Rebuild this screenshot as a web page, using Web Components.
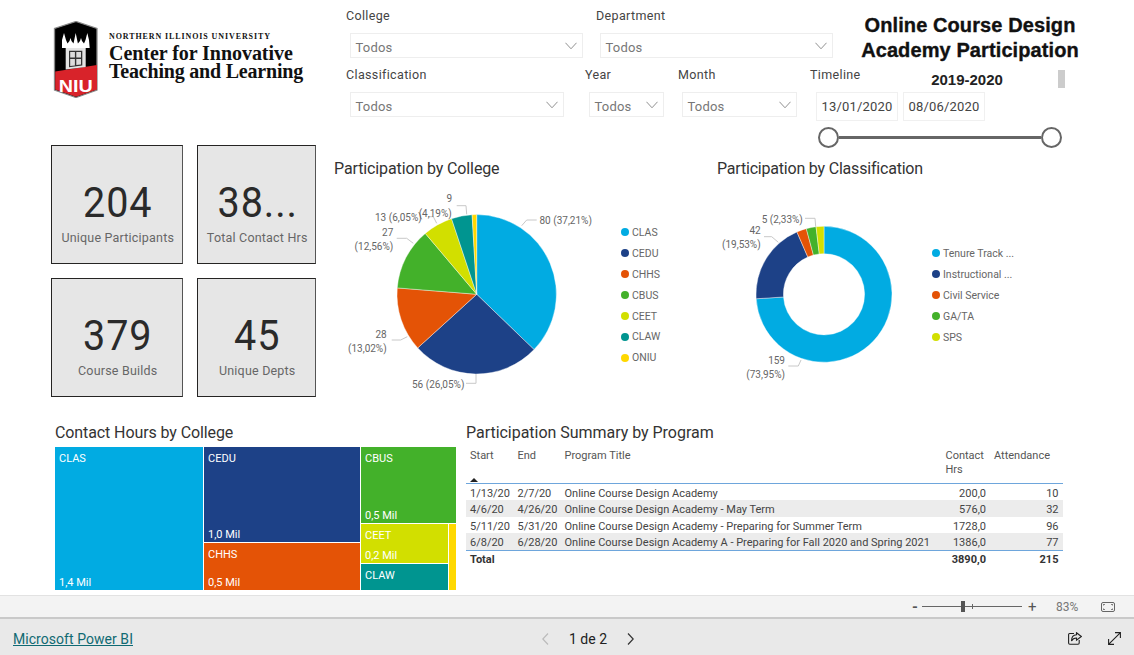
<!DOCTYPE html>
<html lang="es"><head><meta charset="utf-8"><title>Online Course Design Academy Participation</title>
<style>
html,body{margin:0;padding:0;background:#fff;overflow:hidden}
body{font-family:Roboto,"Liberation Sans",sans-serif;width:1134px;height:655px}
pbi-app{display:block}
</style></head>
<body>
<pbi-app>
  <pbi-header></pbi-header>
  <pbi-middle></pbi-middle>
  <pbi-bottom></pbi-bottom>
  <pbi-zoombar></pbi-zoombar>
  <pbi-footer></pbi-footer>
</pbi-app>
<script>
const COLORS={blue:'#01ABE2',navy:'#1D4187',orange:'#E45306',green:'#43B12A',lime:'#D2DF00',teal:'#009590',gold:'#FFD800'};
function def(name,html,init){
  customElements.define(name,class extends HTMLElement{
    connectedCallback(){
      if(this.shadowRoot)return;
      const r=this.attachShadow({mode:'open'});
      r.innerHTML=typeof html==='function'?html(this):html;
      if(init)init(this,r);
    }
  });
}
def('pbi-slicer',h=>`<style>
:host{display:block;flex:none;width:${h.getAttribute('w')}px;margin-right:${h.getAttribute('mr')||0}px}
.l{font-size:12.5px;line-height:16px;color:#444;letter-spacing:.35px;height:16px;white-space:nowrap}
.b{margin:9px 0 0 4px;height:25px;box-sizing:border-box;border:1px solid #eeeeee;display:flex;align-items:center;justify-content:space-between;padding:4px 5px 0 4.5px;font-size:13px;color:#777;letter-spacing:.2px}
svg{width:12px;height:8px;margin-top:-4px;flex:none}
</style><div class="l">${h.getAttribute('label')}</div><div class="b"><span>Todos</span><svg viewBox="0 0 13 8"><path d="M.5.5 6.5 7 12.5.5" fill="none" stroke="#888" stroke-width="1"/></svg></div>`);

def('niu-logo',`<style>
:host{display:flex;flex:none;width:346px;box-sizing:border-box;padding:21px 0 0 53px;align-items:flex-start}
svg{width:46px;height:77px;flex:none}
.t{margin:11px 0 0 10px;font-family:"Liberation Serif",serif;color:#111;font-weight:bold}
.s{font-size:8px;line-height:9px;letter-spacing:.9px;white-space:nowrap}
.m{font-size:20px;line-height:17.5px;letter-spacing:-.05px;margin-top:4px;white-space:nowrap}
.m span{letter-spacing:-.2px}
</style>
<svg viewBox="0 0 46 77">
<path d="M23 .5 44 7.500V69L23 76.500 1.500 69V7.500Z" fill="#000" stroke="#8a8a8a" stroke-width="1.300"/>
<path d="M2.200 50.500 44 44V68.500L23 75.800 2.200 68.500Z" fill="#D8232A"/>
<path d="M9 27V19L11 12 13 19 14.500 22.500 16.500 20 17.500 17 18.500 20 20.500 22.500 22.700 12 24.900 22.500 27 20 28 17 29 20 31 22.500 32.500 19 34.300 12 36 19 36.700 27Z" fill="#fff"/>
<path d="M12.700 27H32.700V46L12.700 48.500Z" fill="#e4e4e4"/>
<path d="M16 29.700H29.300V44.500L16 46.200Z" fill="#333"/>
<path d="M17.200 31h4.700v5.500h-4.700zM23.300 31H28v5.500h-4.700zM17.200 38h4.700v6.500l-4.700.5zM23.300 38H28v5.500l-4.700.6z" fill="#dcdcdc"/>
<text x="22.800" y="70.500" text-anchor="middle" textLength="34" lengthAdjust="spacingAndGlyphs" font-family="Liberation Sans, sans-serif" font-weight="700" font-size="16" fill="#fff">NIU</text>
</svg>
<div class="t"><div class="s">NORTHERN ILLINOIS UNIVERSITY</div><div class="m">Center for Innovative<br><span>Teaching and Learning</span></div></div>`);

def('pbi-timeline',`<style>
:host{display:block;flex:none;width:262px}
.h{display:flex;height:25px}
.l{font-size:12.5px;line-height:16px;color:#444;letter-spacing:.35px;width:112px}
.y{font:bold 15px/20px "Liberation Sans",sans-serif;color:#222;width:90px;text-align:center;margin-top:3px;white-space:nowrap}
.bar{width:7px;height:18px;background:#ccc;margin:3px 0 0 46px}
.d{display:flex;gap:5px;margin-left:6px}
.d span{width:82px;height:29px;box-sizing:border-box;border:1px solid #f0f0f0;font-size:13px;line-height:28px;text-align:center;color:#444;letter-spacing:.2px}
.s{display:flex;align-items:center;margin:6px 0 0 8px;width:244px}
.k{width:21px;height:21px;box-sizing:border-box;border:2px solid #666;border-radius:50%;background:#fff;flex:none}
.ln{flex:1;height:3px;background:#666;}
</style>
<div class="h"><div class="l">Timeline</div><div class="y">2019-2020</div><div class="bar"></div></div>
<div class="d"><span>13/01/2020</span><span>08/06/2020</span></div>
<div class="s"><div class="k"></div><div class="ln"></div><div class="k"></div></div>`);

def('pbi-header',`<style>
:host{display:flex;height:145px;box-sizing:border-box}
.r{display:flex;flex-direction:column;padding-top:8px}
.row{display:flex}
.row+.row{margin-top:9px}
.title{flex:none;width:230px;height:45px;margin:5px 0 0 22px;font:bold 20px/25px "Liberation Sans",sans-serif;color:#111;text-align:center;-webkit-text-stroke:.35px #111;letter-spacing:.1px;white-space:nowrap}
</style>
<niu-logo></niu-logo>
<div class="r">
  <div class="row">
    <pbi-slicer label="College" w="237" mr="13"></pbi-slicer>
    <pbi-slicer label="Department" w="237"></pbi-slicer>
    <div class="title">Online Course Design<br>Academy Participation</div>
  </div>
  <div class="row">
    <pbi-slicer label="Classification" w="218" mr="21"></pbi-slicer>
    <pbi-slicer label="Year" w="79" mr="14"></pbi-slicer>
    <pbi-slicer label="Month" w="119" mr="13"></pbi-slicer>
    <pbi-timeline></pbi-timeline>
  </div>
</div>`);

def('pbi-card',h=>`<style>
:host{display:flex;flex-direction:column;align-items:center;box-sizing:border-box;border:1px solid #252423;border-right-color:#555;background:#e6e6e6;height:119px;color:#252423;padding-left:1.500px}
.n{font-size:43px;line-height:50px;margin-top:31px;letter-spacing:1px;font-weight:400;color:#2a2a2a;transform:scaleX(.92)}
.l{font-size:12.5px;line-height:16px;color:#666;margin-top:3px;letter-spacing:.2px;white-space:nowrap}
</style><div class="n">${h.getAttribute('value')}</div><div class="l">${h.getAttribute('label')}</div>`);

function polar(cx,cy,r,frac){const a=frac*2*Math.PI;return [cx+r*Math.sin(a),cy-r*Math.cos(a)];}
function slicePaths(cx,cy,ro,ri,slices){
  let acc=0,out='';
  for(const [v,c] of slices){
    const f0=acc,f1=acc+v/100;acc=f1;
    const p0=polar(cx,cy,ro,f0),p1=polar(cx,cy,ro,f1),la=(f1-f0)>.5?1:0;
    const fx=n=>n.toFixed(2);
    let d=`M${fx(p0[0])} ${fx(p0[1])}A${ro} ${ro} 0 ${la} 1 ${fx(p1[0])} ${fx(p1[1])}`;
    if(ri){const q1=polar(cx,cy,ri,f1),q0=polar(cx,cy,ri,f0);
      d+=`L${fx(q1[0])} ${fx(q1[1])}A${ri} ${ri} 0 ${la} 0 ${fx(q0[0])} ${fx(q0[1])}Z`;
    } else d+=`L${cx} ${cy}Z`;
    out+=`<path d="${d}" fill="${c}" stroke="#fff" stroke-width=".4"/>`;
  }
  return out;
}
def('pbi-legend',h=>{
  const items=JSON.parse(h.getAttribute('items'));
  return `<style>
:host{display:block;flex:none}
div{display:flex;align-items:center;height:20.9px;font-size:10.5px;color:#666;white-space:nowrap}
i{width:8px;height:8px;border-radius:50%;margin-right:3px;flex:none}
</style>`+items.map(([t,c])=>`<div><i style="background:${c}"></i><span>${t}</span></div>`).join('');
});

const lbl=(x,y,t,a='start')=>`<text x="${x}" y="${y}" text-anchor="${a}">${t}</text>`;
const ldr=pts=>`<polyline points="${pts}"/>`;
const CHART_CSS=`
:host{display:block;flex:none}
h3{margin:0;font-weight:400;font-size:16px;line-height:20px;color:#333;white-space:nowrap;letter-spacing:-.12px}
.body{display:flex}
svg{display:block;flex:none}
text{font-family:Roboto,"Liberation Sans",sans-serif;font-size:10px;fill:#666}
polyline{fill:none;stroke:#c8c8c8;stroke-width:1}
`;
def('pbi-college-pie',`<style>${CHART_CSS}
:host{width:370px;box-sizing:border-box;padding-top:14px}
h3{padding-left:4px}
pbi-legend{margin:43px 0 0 6px}
</style><h3>Participation by College</h3><div class="body">
<svg width="285" height="224" viewBox="330 179 285 224">
${slicePaths(476.7,294.3,79.7,0,[[37.21,COLORS.blue],[26.05,COLORS.navy],[13.02,COLORS.orange],[12.56,COLORS.green],[6.05,COLORS.lime],[4.19,COLORS.teal],[.92,COLORS.gold]])}
${ldr('521.7,225.7 526.7,220 536.7,220')}
${ldr('476,374 476,383.300 466,383.300')}
${ldr('407.300,336.700 400.700,340 391.700,340')}
${ldr('413.300,243.300 406.700,238.300 396.700,238.300')}
${ldr('436.700,223.300 433.300,216.700 428,216.700')}
${ldr('466.700,214.300 466,205.700 456.700,205.700')}
${lbl(539.5,224,'80 (37,21%)')}
${lbl(412,387.7,'56 (26,05%)')}
${lbl(386.7,337.7,'28','end')}${lbl(386.7,351.7,'(13,02%)','end')}
${lbl(393.3,235.7,'27','end')}${lbl(393.3,250,'(12,56%)','end')}
${lbl(375,220.7,'13 (6,05%)')}
${lbl(452,202.3,'9','end')}${lbl(451.7,217.3,'(4,19%)','end')}
</svg>
<pbi-legend items='[["CLAS","${COLORS.blue}"],["CEDU","${COLORS.navy}"],["CHHS","${COLORS.orange}"],["CBUS","${COLORS.green}"],["CEET","${COLORS.lime}"],["CLAW","${COLORS.teal}"],["ONIU","${COLORS.gold}"]]'></pbi-legend>
</div>`);

def('pbi-class-donut',`<style>${CHART_CSS}
:host{width:360px;box-sizing:border-box;padding-top:14px}
h3{padding-left:17px;letter-spacing:-.2px}
pbi-legend{margin:64px 0 0 7px}
</style><h3>Participation by Classification</h3><div class="body">
<svg width="225" height="224" viewBox="700 179 225 224">
${slicePaths(824,294.3,68,40.6,[[73.95,COLORS.blue],[19.53,COLORS.navy],[2.33,COLORS.orange],[2.33,COLORS.green],[1.86,COLORS.lime]])}
${ldr('815.700,226.700 815,218.300 805,218.300')}
${ldr('778.300,242.300 771.700,236.700 764,236.700')}
${ldr('801,360 798.300,366 788.300,366')}
${lbl(761.7,222.7,'5 (2,33%)')}
${lbl(760.7,233.7,'42','end')}${lbl(760.7,248.3,'(19,53%)','end')}
${lbl(785,364,'159','end')}${lbl(785,377.7,'(73,95%)','end')}
</svg>
<pbi-legend items='[["Tenure Track ...","${COLORS.blue}"],["Instructional ...","${COLORS.navy}"],["Civil Service","${COLORS.orange}"],["GA/TA","${COLORS.green}"],["SPS","${COLORS.lime}"]]'></pbi-legend>
</div>`);

def('pbi-middle',`<style>
:host{display:flex;height:275px;box-sizing:border-box;padding-left:51px}
.cards{flex:none;display:grid;grid-template-columns:132px 119px;grid-auto-rows:119px;gap:14px;margin-right:14px;align-self:flex-start}
</style>
<div class="cards">
<pbi-card value="204" label="Unique Participants"></pbi-card>
<pbi-card value="38..." label="Total Contact Hrs"></pbi-card>
<pbi-card value="379" label="Course Builds"></pbi-card>
<pbi-card value="45" label="Unique Depts"></pbi-card>
</div>
<pbi-college-pie></pbi-college-pie>
<pbi-class-donut></pbi-class-donut>`);

def('pbi-tile',h=>`<style>
:host{display:flex;flex-direction:column;justify-content:space-between;box-sizing:border-box;background:${h.getAttribute('c')};color:#fff;font-size:11px;line-height:14px;padding:5px 4px 0;overflow:hidden}
</style><span>${h.getAttribute('n')||''}</span><span>${h.getAttribute('v')||''}</span>`);

def('pbi-treemap',`<style>
:host{display:block;flex:none;width:466px;box-sizing:border-box;padding-left:55px}
h3{margin:0;font-weight:400;font-size:16px;line-height:20px;color:#333;white-space:nowrap;letter-spacing:-.1px;height:24px;padding-top:3px}
.m{display:flex;gap:1px;width:401px;height:143px}
.c{display:flex;flex-direction:column;gap:1px;flex:none}
.r{display:flex;gap:1px}
</style><h3>Contact Hours by College</h3>
<div class="m">
 <pbi-tile c="${COLORS.blue}" n="CLAS" v="1,4 Mil" style="width:148px;flex:none"></pbi-tile>
 <div class="c" style="width:156px">
  <pbi-tile c="${COLORS.navy}" n="CEDU" v="1,0 Mil" style="height:95px"></pbi-tile>
  <pbi-tile c="${COLORS.orange}" n="CHHS" v="0,5 Mil" style="flex:1"></pbi-tile>
 </div>
 <div class="c" style="width:95px">
  <pbi-tile c="${COLORS.green}" n="CBUS" v="0,5 Mil" style="height:76px"></pbi-tile>
  <div class="r" style="flex:1;min-height:0">
   <div class="c" style="width:87px">
    <pbi-tile c="${COLORS.lime}" n="CEET" v="0,2 Mil" style="height:39px"></pbi-tile>
    <pbi-tile c="${COLORS.teal}" n="CLAW" style="flex:1"></pbi-tile>
   </div>
   <pbi-tile c="${COLORS.gold}" style="flex:1;padding:0"></pbi-tile>
  </div>
 </div>
</div>`);

const ROWS=[['1/13/20','2/7/20','Online Course Design Academy','200,0','10'],
['4/6/20','4/26/20','Online Course Design Academy - May Term','576,0','32'],
['5/11/20','5/31/20','Online Course Design Academy - Preparing for Summer Term','1728,0','96'],
['6/8/20','6/28/20','Online Course Design Academy A - Preparing for Fall 2020 and Spring 2021','1386,0','77']];
def('pbi-table',`<style>
:host{display:block;flex:none;width:597px}
h3{margin:0;font-weight:400;font-size:16px;line-height:20px;color:#333;white-space:nowrap;letter-spacing:-.03px;height:23px;padding-top:3px}
.g{display:grid;grid-template-columns:47.500px 47px 381px 49px 1fr;font-size:11px;color:#444}
.g>*{white-space:nowrap;padding-left:4px;box-sizing:border-box}
.hd{height:38px;line-height:14px;padding-top:3px;border-bottom:1.500px solid #6ea6dc;position:relative;color:#555}
.hd.w{white-space:normal}
.caret{position:absolute;left:4px;bottom:1px;width:0;height:0;border:4px solid transparent;border-top:0;border-bottom:4px solid #222}
.c{height:16.400px;line-height:19px}
.s{background:#ececec}
.num{text-align:right;padding-right:4.500px}
.t{height:18px;line-height:18px;border-top:1.500px solid #6ea6dc;font-weight:700;color:#333}
</style><h3>Participation Summary by Program</h3>
<div class="g" id="g"></div>`,(h,r)=>{
  let html=`<div class="hd">Start<span class="caret"></span></div><div class="hd">End</div><div class="hd">Program Title</div><div class="hd w" style="padding-right:0">Contact Hrs</div><div class="hd" style="padding-left:0;text-align:right;padding-right:13px">Attendance</div>`;
  ROWS.forEach((row,i)=>{const s=i%2?' s':'';
    row.forEach((v,j)=>{html+=`<div class="c${s}${j>2?' num':''}">${v}</div>`;});
  });
  html+=`<div class="t">Total</div><div class="t"></div><div class="t"></div><div class="t num">3890,0</div><div class="t num">215</div>`;
  r.getElementById('g').innerHTML=html;
});

def('pbi-bottom',`<style>
:host{display:flex;height:175px;box-sizing:border-box}
</style><pbi-treemap></pbi-treemap><pbi-table></pbi-table>`);

def('pbi-zoombar',`<style>
:host{display:flex;align-items:center;height:24px;box-sizing:border-box;border-top:1px solid #e2e2e2;border-bottom:2px solid #c9c9c9;background:#f3f3f3;padding-left:912px;color:#666}
.b{font-size:15px;line-height:20px;width:6px;color:#555;font-weight:700;text-align:center}
.t{position:relative;width:100px;height:1px;background:#666;margin:0 6px 0 4px}
.k{position:absolute;left:39px;top:-5px;width:4px;height:11px;background:#555}
.k2{position:absolute;left:50px;top:-2px;width:1px;height:5px;background:#666}
.p{font-size:12px;color:#777;margin-left:20px;width:24px}
.f{width:14px;height:10px;box-sizing:border-box;border:1px solid #666;border-radius:2px;margin-left:21px;position:relative}
svg{position:absolute;left:1px;top:1px}
</style><span class="b">-</span><div class="t"><div class="k"></div><div class="k2"></div></div><span class="b" style="width:8px;font-weight:400">+</span><span class="p">83%</span><div class="f"><svg width="10" height="6" viewBox="0 0 10 6" fill="none" stroke="#666" stroke-width=".8"><path d="M0 2V.5H2M8 .5H10V2M10 4V5.500H8M2 5.500H0V4"/></svg></div>`);

def('pbi-footer',`<style>
:host{display:flex;align-items:center;height:36px;background:#e9e9e9;position:relative;box-sizing:border-box;padding:3px 0 0 13px}
a{font-size:14px;color:#106a73;text-decoration:underline;width:529px;flex:none;letter-spacing:.05px;white-space:nowrap}
.n{display:flex;align-items:center;flex:none}
.p{font-size:14px;color:#222;margin:0 20px 0 20px;width:38px;white-space:nowrap}
.sp{flex:1}
.ic{display:flex;gap:26px;padding-right:13px;align-items:center}
</style><a href="#">Microsoft Power BI</a>
<div class="n">
<svg width="7" height="12" viewBox="0 0 7 12"><path d="M6 .5.8 6 6 11.500" fill="none" stroke="#bbb" stroke-width="1.200"/></svg>
<span class="p">1 de 2</span>
<svg width="7" height="12" viewBox="0 0 7 12"><path d="M1 .5 6.200 6 1 11.500" fill="none" stroke="#333" stroke-width="1.200"/></svg>
</div>
<div class="sp"></div>
<div class="ic">
<svg width="14" height="13" viewBox="0 0 14 13" fill="none" stroke="#222" stroke-width="1.100"><path d="M6 1.500H1.500C1 1.500.6 2 .6 2.500V11c0 .7.5 1.200 1.200 1.200H10c.7 0 1.200-.5 1.200-1.200V8"/><path d="M8.500.8 13.300 4.500 8.500 8.200V6C6 6 4.500 7 3.500 9c0-3.500 2-6 5-6.200Z"/></svg>
<svg width="13" height="13" viewBox="0 0 13 13" fill="none" stroke="#222" stroke-width="1.100"><path d="M.8 12.200 12.200.8M7 .6H12.400V6M.6 7V12.400H6"/></svg>
</div>`);
</script>
</body></html>
